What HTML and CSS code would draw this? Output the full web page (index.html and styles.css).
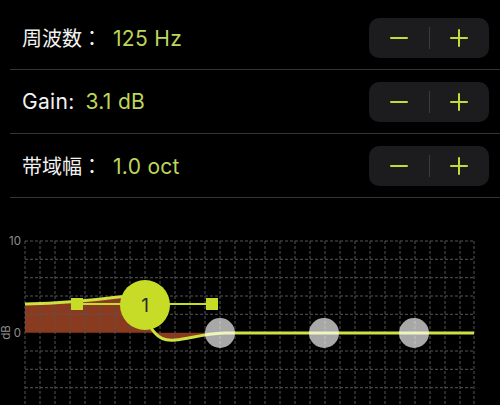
FILE: index.html
```html
<!DOCTYPE html>
<html>
<head>
<meta charset="utf-8">
<link rel="stylesheet" href="styles.css">
</head>
<body>
<div class="list">
  <div class="row">
    <div class="text"><span class="label cjk">周波数：</span><span class="value">125 Hz</span></div>
    <div class="stepper"><div class="half"><span class="minus"></span></div><div class="divider"></div><div class="half"><span class="plus"></span></div></div>
  </div>
  <div class="row">
    <div class="text"><span class="label">Gain:</span><span class="value gain">3.1 dB</span></div>
    <div class="stepper"><div class="half"><span class="minus"></span></div><div class="divider"></div><div class="half"><span class="plus"></span></div></div>
  </div>
  <div class="row">
    <div class="text"><span class="label cjk">带域幅：</span><span class="value">1.0 oct</span></div>
    <div class="stepper"><div class="half"><span class="minus"></span></div><div class="divider"></div><div class="half"><span class="plus"></span></div></div>
  </div>
</div>
<div class="graph">
  <svg class="chart" width="500" height="207" viewBox="0 198 500 207" xmlns="http://www.w3.org/2000/svg">
    <path class="fill" d="M25,304 C70,303 95,300 118,297 C135,294 142,318 155,333 C160,339 166,341 175,340 C190,339 200,334 225,333 L225,332.7 L25,332.7 Z"/>
    <g class="grid">
      <path d="M25,241V405 M40,241V405 M55,241V405 M70,241V405 M85,241V405 M100,241V405 M115,241V405 M130,241V405 M145,241V405 M160,241V405 M175,241V405 M190,241V405 M205,241V405 M220,241V405 M235,241V405 M250,241V405 M265,241V405 M280,241V405 M295,241V405 M310,241V405 M325,241V405 M340,241V405 M355,241V405 M370,241V405 M385,241V405 M400,241V405 M415,241V405 M430,241V405 M445,241V405 M460,241V405 M474,241V405"/>
      <path d="M25,241H474 M25,259.3H474 M25,277.7H474 M25,296H474 M25,314.3H474 M25,351H474 M25,369.3H474 M25,387.7H474"/>
    </g>
    <text class="axis" x="21" y="245" text-anchor="end">10</text>
    <text class="axis" x="21" y="337" text-anchor="end">0</text>
    <text class="axis" x="0" y="0" text-anchor="middle" transform="translate(10,332.5) rotate(-90)">dB</text>
    <path class="curve" d="M25,304 C70,303 95,300 118,297 C135,294 142,318 155,333 C160,339 166,341 175,340 C190,339 200,334 225,333 L474,333"/>
    <path class="handle" d="M77,304H212"/>
    <rect class="sq" x="71" y="298" width="12" height="12"/>
    <rect class="sq" x="206" y="298" width="12" height="12"/>
    <circle class="node" cx="145" cy="305" r="25"/>
    <text class="nodetext" x="145" y="312" text-anchor="middle">1</text>
    <circle class="ghost" cx="220" cy="333" r="15"/>
    <circle class="ghost" cx="324" cy="333" r="15"/>
    <circle class="ghost" cx="414" cy="333" r="15"/>
  </svg>
</div>
</body>
</html>
```

FILE: styles.css
```css
html, body {
  margin: 0;
  padding: 0;
  background: #000;
  width: 500px;
  height: 405px;
  overflow: hidden;
}
body {
  font-family: "Inter", "Noto Sans CJK JP", sans-serif;
  color: #f2f2f2;
}
.list {
  padding-top: 6px;
}
.row {
  height: 63px;
  margin-left: 10px;
  padding-left: 12px;
  padding-right: 11px;
  border-bottom: 1px solid #333;
  display: flex;
  align-items: center;
  justify-content: space-between;
}
.text {
  display: flex;
  align-items: baseline;
  font-size: 21px;
  letter-spacing: 0.3px;
}
.label {
  color: #f2f2f2;
}
.label.cjk {
  font-family: "Noto Sans CJK JP", sans-serif;
  font-size: 20px;
  letter-spacing: 0;
}
.value {
  color: #bdd65c;
  margin-left: 11px;
}
.value.gain {
  margin-left: 11px;
}
.stepper {
  width: 120px;
  height: 40px;
  background: #1c1c1e;
  border-radius: 10px;
  display: flex;
  align-items: center;
}
.half {
  flex: 1;
  height: 100%;
  display: flex;
  align-items: center;
  justify-content: center;
  position: relative;
}
.divider {
  width: 1px;
  height: 22px;
  background: #3a3a3c;
}
.minus {
  width: 18px;
  height: 2px;
  background: #c4dc3a;
  border-radius: 1px;
}
.plus {
  width: 18px;
  height: 18px;
  position: relative;
}
.plus::before, .plus::after {
  content: "";
  position: absolute;
  background: #c4dc3a;
  border-radius: 1px;
}
.plus::before {
  left: 0;
  top: 8px;
  width: 18px;
  height: 2px;
}
.plus::after {
  left: 8px;
  top: 0;
  width: 2px;
  height: 18px;
}
.graph {
  height: 207px;
}
.chart {
  display: block;
}
.fill {
  fill: #8a3a1e;
}
.grid path {
  stroke: #555;
  stroke-width: 1;
  stroke-dasharray: 3 2;
  fill: none;
}
.axis {
  fill: #8e8e8e;
  font-family: "Inter", sans-serif;
  font-size: 11.5px;
}
.curve {
  fill: none;
  stroke: #cfe040;
  stroke-width: 3;
}
.handle {
  stroke: #c6dc27;
  stroke-width: 2;
}
.sq {
  fill: #c6dc27;
}
.node {
  fill: #c6dc27;
}
.nodetext {
  fill: #2b2b2b;
  font-family: "Inter", sans-serif;
  font-size: 19px;
}
.ghost {
  fill: rgba(255, 255, 255, 0.66);
}
```
